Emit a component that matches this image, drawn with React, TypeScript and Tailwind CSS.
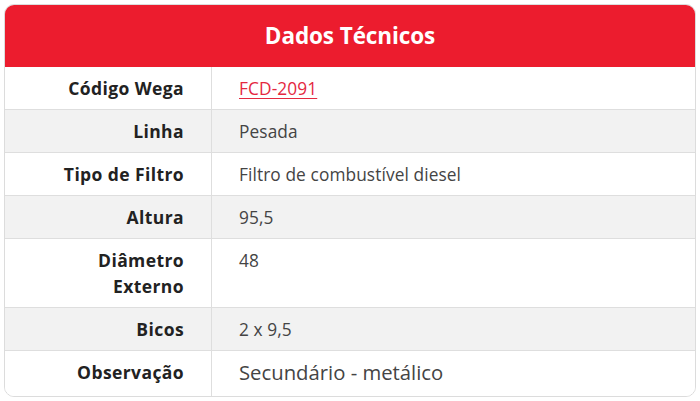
import React from "react";

const rows: { label: React.ReactNode; value: React.ReactNode; gray?: boolean; tall?: boolean; big?: boolean }[] = [
  { label: "Código Wega", value: <a href="#" className="text-[#e4283f] underline decoration-1 underline-offset-[3px]">FCD-2091</a> },
  { label: "Linha", value: "Pesada", gray: true },
  { label: "Tipo de Filtro", value: "Filtro de combustível diesel" },
  { label: "Altura", value: "95,5", gray: true },
  { label: <>Diâmetro<br />Externo</>, value: "48", tall: true },
  { label: "Bicos", value: "2 x 9,5", gray: true },
  { label: "Observação", value: "Secundário - metálico", big: true },
];

export default function App() {
  return (
    <div className="w-[700px] h-[401px] bg-white pt-[4px] pl-[4px]" style={{ fontFamily: '"Open Sans", "Noto Sans", sans-serif' }}>
      <div className="w-[692px] h-[393px] border border-[#dcdcdc] rounded-[10px] overflow-hidden flex flex-col">
        <div className="h-[62px] bg-[#ec1c2e] flex items-center justify-center shrink-0">
          <span className="text-white font-bold text-[22.5px] tracking-[-0.1px]">Dados Técnicos</span>
        </div>
        {rows.map((r, i) => (
          <div
            key={i}
            className={`flex ${i < rows.length - 1 ? "border-b border-[#dedede]" : ""} ${r.gray ? "bg-[#f2f2f2]" : "bg-white"} ${r.big ? "flex-1" : ""}`}
          >
            <div className={`w-[207px] shrink-0 border-r border-[#dedede] text-right pr-[27px] text-[17.5px] font-bold text-[#222] tracking-[0.4px] ${r.tall ? "py-[8px] leading-[26px]" : "py-[7.5px] leading-[27px]"}`}>
              {r.label}
            </div>
            <div className={`pl-[27px] py-[7.5px] leading-[27px] text-[#444] ${r.big ? "text-[20.3px]" : "text-[17.3px] tracking-[0.1px]"}`}>
              {r.value}
            </div>
          </div>
        ))}
      </div>
    </div>
  );
}
